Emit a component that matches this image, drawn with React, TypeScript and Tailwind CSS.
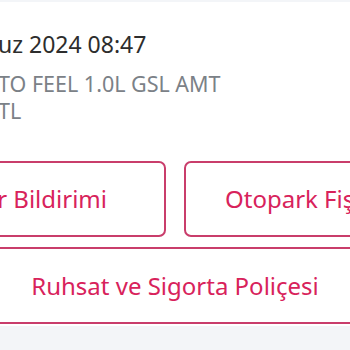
import type { ReactNode } from 'react';

// Brand colours picked from the screenshot.
const BORDER = 'border-2 border-[#c93d6b]';

function ActionButton({ children, className }: { children: ReactNode; className?: string }) {
  return (
    <button
      className={`flex items-center rounded-[7px] bg-white ${BORDER} text-[24px] leading-none text-[#d8225b] whitespace-nowrap ${className ?? ''}`}
    >
      {children}
    </button>
  );
}

export default function App() {
  return (
    <div className="w-[350px] h-[350px] overflow-hidden bg-[#f3f5f8] font-['Noto_Sans','Open_Sans',sans-serif]">
      <div className="mt-[2px] bg-white pb-[2px]">
        {/* order header: date, model, price */}
        <div className="pt-[26px] -ml-[2px] whitespace-nowrap">
          <p className="text-[23px] leading-[32px] text-[#2d2d2d]">uz 2024 08:47</p>
          <p className="mt-[10px] text-[21.5px] leading-[27px] text-[#7b8187]">TO FEEL 1.0L GSL AMT</p>
          <p className="text-[21.5px] leading-[27px] text-[#7b8187]">TL</p>
        </div>

        {/* document actions */}
        <div className="-mx-[120px] mt-[37px] flex flex-col gap-[10px]">
          <div className="grid grid-cols-2 gap-[18px]">
            <ActionButton className="h-[76px] justify-end pr-[57px]">Hasar Bildirimi</ActionButton>
            <ActionButton className="h-[76px] justify-start pl-[39px]">Otopark Fişi</ActionButton>
          </div>
          <ActionButton className="h-[77px] justify-center">Ruhsat ve Sigorta Poliçesi</ActionButton>
        </div>
      </div>
    </div>
  );
}
